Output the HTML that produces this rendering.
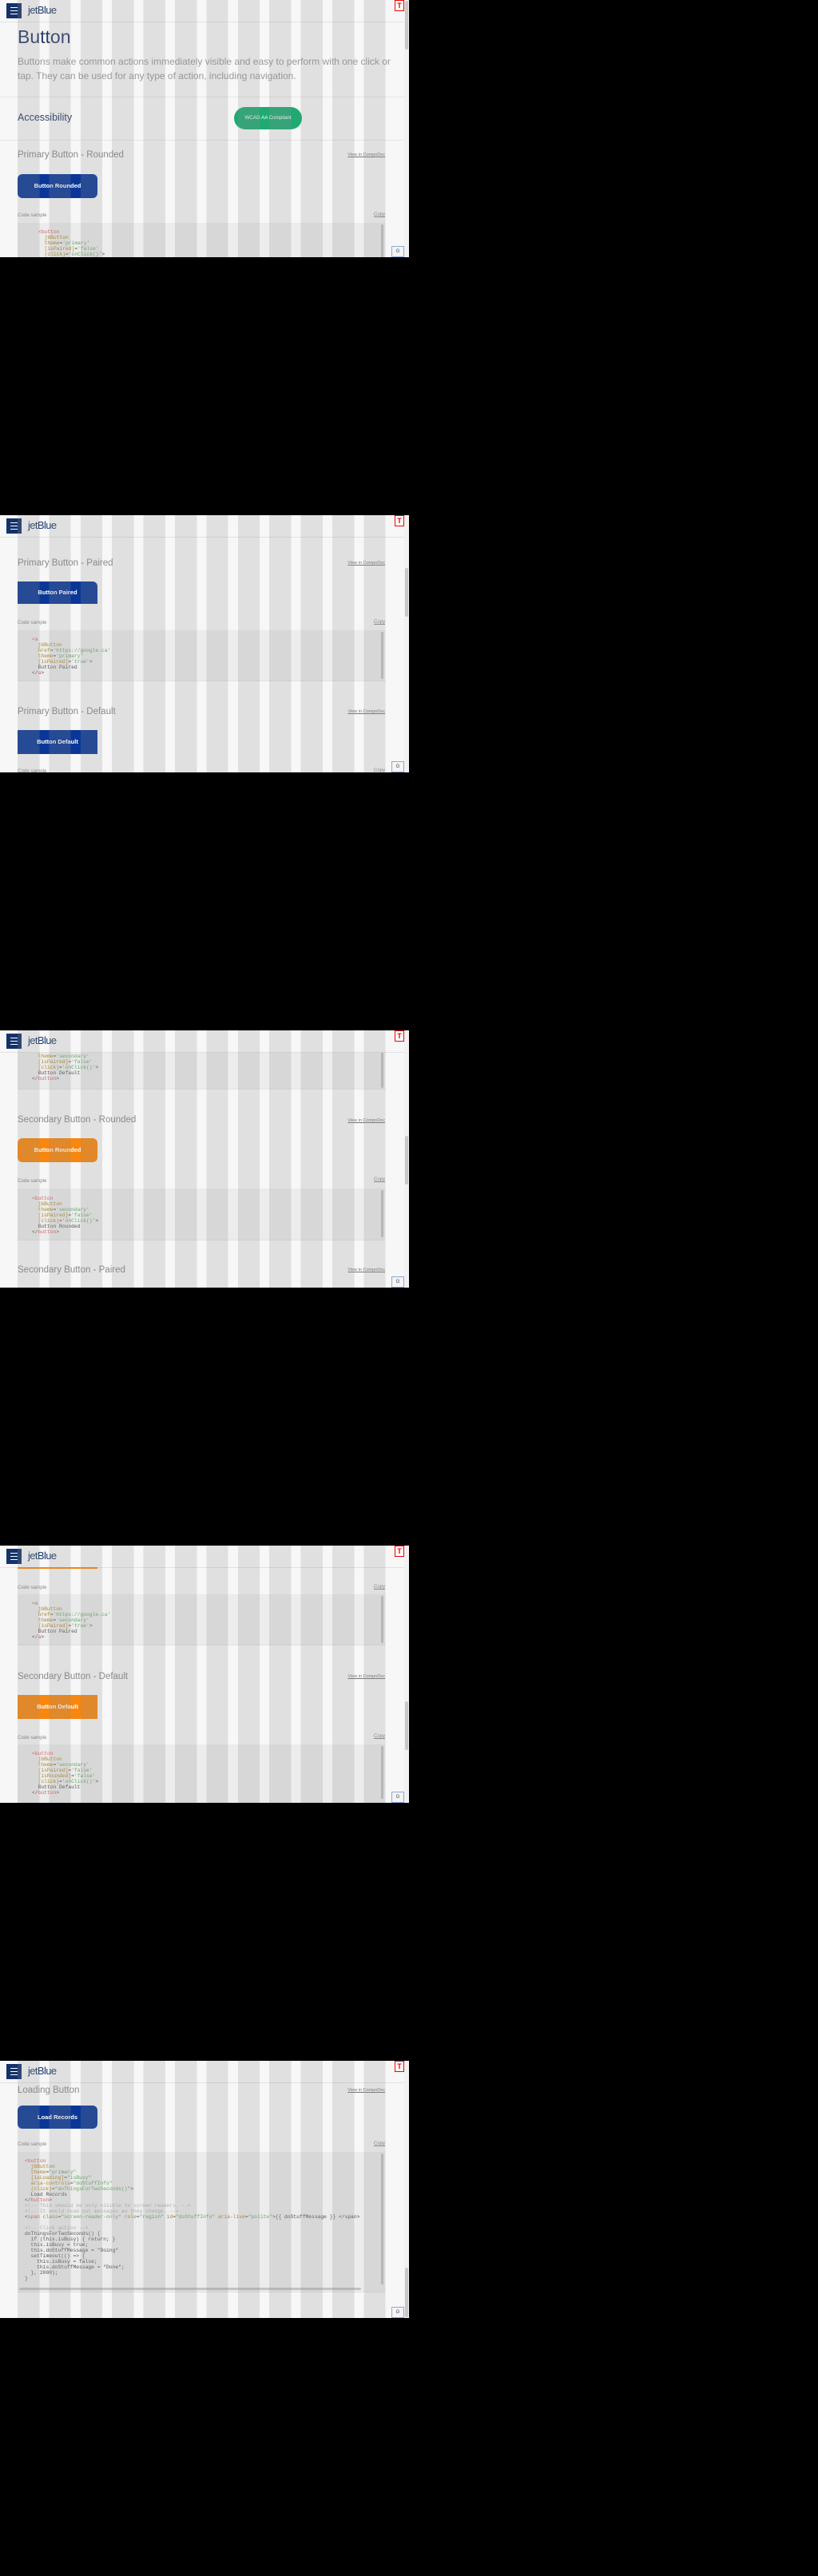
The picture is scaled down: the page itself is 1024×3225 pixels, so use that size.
<!DOCTYPE html>
<html><head><meta charset="utf-8">
<style>
*{margin:0;padding:0;box-sizing:border-box}
html,body{width:1024px;height:3225px;background:#000;overflow:hidden}
body{position:relative;font-family:"Liberation Sans",sans-serif}
.p{position:absolute;left:0;width:512px;height:322px;overflow:hidden;background:#f7f7f7}
.grid{position:absolute;left:22px;top:0;width:461px;height:322px;z-index:50;pointer-events:none;
background:repeating-linear-gradient(90deg,rgba(140,140,140,.22) 0 27.3px,transparent 27.3px 39.4px)}
.hdr{position:absolute;left:0;top:0;width:506px;height:28px;background:#f7f7f7;border-bottom:1px solid #e2e2e2;z-index:20}
.ham{position:absolute;left:8px;top:4px;width:19px;height:19px;background:#14316a}
.ham i{position:absolute;left:5px;width:9px;height:1.4px;background:#fff}
.logo{position:absolute;left:35px;top:5px;font-size:13px;color:#1b3a6b;letter-spacing:-.6px}
.tbox{position:absolute;left:494px;top:0;width:12px;height:14px;border:1px solid #e00;color:#e00;font-size:9px;font-weight:bold;text-align:center;line-height:12px;z-index:60;background:#fff}
.gbox{position:absolute;left:490px;top:308px;width:16px;height:14px;border:1px solid #8aa8e0;background:#f4f4f4;color:#444;font-size:6px;text-align:center;line-height:12px;z-index:60}
.sb{position:absolute;left:506px;top:0;width:6px;height:322px;background:#f1f1f1;z-index:30}
.sb i{position:absolute;left:1px;width:4px;background:#c8c8c8;border-radius:2px}
.h{position:absolute;left:22px;font-size:11.5px;color:#8a8a8a;line-height:14px}
.vc{position:absolute;right:30px;font-size:5.5px;color:#777;text-decoration:underline}
.cs{position:absolute;left:22px;font-size:6.2px;color:#888}
.cp{position:absolute;right:30px;font-size:6px;color:#888;text-decoration:underline}
.btn{position:absolute;left:22px;width:100px;height:30px;color:#fff;font-weight:bold;font-size:7.5px;text-align:center;line-height:30px}
.blue{background:#0a3797}.org{background:#f7870f}
.code{position:absolute;left:22px;width:460px;background:#ececec;border-bottom:1px solid #e2e2e2}
.code pre{position:absolute;left:18px;font-family:"Liberation Mono",monospace;font-size:6.3px;line-height:7px;color:#555;white-space:pre}
.code .vs{position:absolute;right:2px;top:2px;width:3px;background:#c2c2c2;border-radius:2px}
.t{color:#e06060}.a{color:#b08a2a}.s{color:#6aa86a}.c{color:#b0b0b0}
.hr{position:absolute;left:0;width:506px;height:1px;background:#e6e6e6}
</style></head><body>

<!-- PANEL 1 -->
<div class="p" style="top:0">
<div class="hdr"><div class="ham"><i style="top:5px"></i><i style="top:9px"></i><i style="top:13px"></i></div><div class="logo">jetBlue</div></div>
<div style="position:absolute;left:22px;top:33px;font-size:23px;color:#2a3c6c">Button</div>
<div style="position:absolute;left:22px;top:68px;width:470px;font-size:12px;line-height:18px;color:#9a9a9a">Buttons make common actions immediately visible and easy to perform with one click or tap. They can be used for any type of action, including navigation.</div>
<div class="hr" style="top:121px"></div>
<div style="position:absolute;left:22px;top:140px;font-size:12.5px;color:#2a3c6c">Accessibility</div>
<div style="position:absolute;left:293px;top:134px;width:85px;height:28px;border-radius:14px;background:#1faa72;color:#fff;font-size:6.2px;text-align:center;line-height:28px">WCAG AA Compliant</div>
<div class="hr" style="top:175px"></div>
<div class="h" style="top:187px">Primary Button - Rounded</div>
<div class="vc" style="top:191px">View in CompoDoc</div>
<div class="btn blue" style="top:218px;border-radius:6px">Button Rounded</div>
<div class="cs" style="top:266px">Code sample</div>
<div class="cp" style="top:266px">Copy</div>
<div class="code" style="top:279px;height:60px"><div class="vs" style="height:50px"></div>
<pre style="top:8px;left:26px"><span class="t">&lt;button</span>
  <span class="a">jbButton</span>
  <span class="a">theme</span>=<span class="s">'primary'</span>
  <span class="a">[isPaired]</span>=<span class="s">'false'</span>
  <span class="a">(click)</span>=<span class="s">'onClick()'</span>&gt;</pre></div>
<div class="sb"><i style="top:1px;height:61px"></i></div>
<div class="grid"></div><div class="tbox">T</div><div class="gbox">G</div>
</div>

<!-- PANEL 2 -->
<div class="p" style="top:645px">
<div class="hdr"><div class="ham"><i style="top:5px"></i><i style="top:9px"></i><i style="top:13px"></i></div><div class="logo">jetBlue</div></div>
<div class="h" style="top:53px">Primary Button - Paired</div>
<div class="vc" style="top:57px">View in CompoDoc</div>
<div class="btn blue" style="top:83px;height:28px;line-height:28px;border-radius:0 6px 0 0">Button Paired</div>
<div class="cs" style="top:131px">Code sample</div>
<div class="cp" style="top:131px">Copy</div>
<div class="code" style="top:144px;height:64px"><div class="vs" style="height:59px"></div>
<pre style="top:8px;left:18px"><span class="t">&lt;a</span>
  <span class="a">jbButton</span>
  <span class="a">href</span>=<span class="s">'https://google.ca'</span>
  <span class="a">theme</span>=<span class="s">'primary'</span>
  <span class="a">[isPaired]</span>=<span class="s">'true'</span>&gt;
  Button Paired
&lt;/<span class="t">a</span>&gt;</pre></div>
<div class="h" style="top:239px">Primary Button - Default</div>
<div class="vc" style="top:243px">View in CompoDoc</div>
<div class="btn blue" style="top:269px">Button Default</div>
<div class="cs" style="top:317px">Code sample</div>
<div class="cp" style="top:317px">Copy</div>
<div class="sb"><i style="top:66px;height:61px"></i></div>
<div class="grid"></div><div class="tbox">T</div><div class="gbox">G</div>
</div>

<!-- PANEL 3 -->
<div class="p" style="top:1290px">
<div class="code" style="top:0;height:74px"><div class="vs" style="height:70px"></div>
<pre style="top:22px;left:18px">  <span class="a">jbButton</span>
  <span class="a">theme</span>=<span class="s">'secondary'</span>
  <span class="a">[isPaired]</span>=<span class="s">'false'</span>
  <span class="a">(click)</span>=<span class="s">'onClick()'</span>&gt;
  Button Default
&lt;/<span class="t">button</span>&gt;</pre></div>
<div class="hdr"><div class="ham"><i style="top:5px"></i><i style="top:9px"></i><i style="top:13px"></i></div><div class="logo">jetBlue</div></div>
<div class="h" style="top:105px">Secondary Button - Rounded</div>
<div class="vc" style="top:110px">View in CompoDoc</div>
<div class="btn org" style="top:135px;border-radius:6px">Button Rounded</div>
<div class="cs" style="top:185px">Code sample</div>
<div class="cp" style="top:184px">Copy</div>
<div class="code" style="top:198px;height:65px"><div class="vs" style="height:59px"></div>
<pre style="top:9px;left:18px"><span class="t">&lt;button</span>
  <span class="a">jbButton</span>
  <span class="a">theme</span>=<span class="s">'secondary'</span>
  <span class="a">[isPaired]</span>=<span class="s">'false'</span>
  <span class="a">(click)</span>=<span class="s">'onClick()'</span>&gt;
  Button Rounded
&lt;/<span class="t">button</span>&gt;</pre></div>
<div class="h" style="top:293px">Secondary Button - Paired</div>
<div class="vc" style="top:297px">View in CompoDoc</div>
<div class="sb"><i style="top:132px;height:61px"></i></div>
<div class="grid"></div><div class="tbox">T</div><div class="gbox">G</div>
</div>

<!-- PANEL 4 -->
<div class="p" style="top:1935px">
<div style="position:absolute;left:22px;top:27px;width:100px;height:2px;background:#f7870f;z-index:25"></div>
<div class="hdr"><div class="ham"><i style="top:5px"></i><i style="top:9px"></i><i style="top:13px"></i></div><div class="logo">jetBlue</div></div>
<div class="cs" style="top:49px">Code sample</div>
<div class="cp" style="top:49px">Copy</div>
<div class="code" style="top:61px;height:64px"><div class="vs" style="height:59px"></div>
<pre style="top:8px;left:18px"><span class="t">&lt;a</span>
  <span class="a">jbButton</span>
  <span class="a">href</span>=<span class="s">'https://google.ca'</span>
  <span class="a">theme</span>=<span class="s">'secondary'</span>
  <span class="a">[isPaired]</span>=<span class="s">'true'</span>&gt;
  Button Paired
&lt;/<span class="t">a</span>&gt;</pre></div>
<div class="h" style="top:157px">Secondary Button - Default</div>
<div class="vc" style="top:161px">View in CompoDoc</div>
<div class="btn org" style="top:187px">Button Default</div>
<div class="cs" style="top:237px">Code sample</div>
<div class="cp" style="top:236px">Copy</div>
<div class="code" style="top:249px;height:75px"><div class="vs" style="height:66px"></div>
<pre style="top:8px;left:18px"><span class="t">&lt;button</span>
  <span class="a">jbButton</span>
  <span class="a">theme</span>=<span class="s">'secondary'</span>
  <span class="a">[isPaired]</span>=<span class="s">'false'</span>
  <span class="a">[isRounded]</span>=<span class="s">'false'</span>
  <span class="a">(click)</span>=<span class="s">'onClick()'</span>&gt;
  Button Default
&lt;/<span class="t">button</span>&gt;</pre></div>
<div class="sb"><i style="top:195px;height:61px"></i></div>
<div class="grid"></div><div class="tbox">T</div><div class="gbox">G</div>
</div>

<!-- PANEL 5 -->
<div class="p" style="top:2580px">
<div class="hdr"><div class="ham"><i style="top:5px"></i><i style="top:9px"></i><i style="top:13px"></i></div><div class="logo">jetBlue</div></div>
<div class="h" style="top:30px">Loading Button</div>
<div class="vc" style="top:34px">View in CompoDoc</div>
<div class="btn blue" style="top:56px;height:29px;line-height:29px;border-radius:6px">Load Records</div>
<div class="cs" style="top:101px">Code sample</div>
<div class="cp" style="top:101px">Copy</div>
<div class="code" style="top:114px;height:176px;overflow:hidden"><div class="vs" style="height:164px"></div>
<pre style="top:8px;left:9px"><span class="t">&lt;button</span>
  <span class="a">jbButton</span>
  <span class="a">theme</span>=<span class="s">"primary"</span>
  <span class="a">[isLoading]</span>=<span class="s">"isBusy"</span>
  <span class="a">aria-controls</span>=<span class="s">"doStuffInfo"</span>
  <span class="a">(click)</span>=<span class="s">"doThingsForTwoSeconds()"</span>&gt;
  Load Records
&lt;/<span class="t">button</span>&gt;
<span class="c">&lt;!-- This should be only visible to screen readers. --&gt;</span>
<span class="c">&lt;!-- It would read out messages as they change. --&gt;</span>
&lt;<span class="t">span</span> <span class="a">class</span>=<span class="s">"screen-reader-only"</span> <span class="a">role</span>=<span class="s">"region"</span> <span class="a">id</span>=<span class="s">"doStuffInfo"</span> <span class="a">aria-live</span>=<span class="s">"polite"</span>&gt;{{ doStuffMessage }} &lt;/span&gt;

<span class="c">&lt;!-- Click action --&gt;</span>
doThingsForTwoSeconds() {
  if (this.isBusy) { return; }
  this.isBusy = true;
  this.doStuffMessage = "Doing"
  setTimeout(() =&gt; {
    this.isBusy = false;
    this.doStuffMessage = "Done";
  }, 2000);
}</pre>
<div style="position:absolute;left:2px;top:170px;width:428px;height:3px;background:#c2c2c2;border-radius:2px"></div>
</div>
<div class="sb"><i style="top:259px;height:62px"></i></div>
<div class="grid"></div><div class="tbox">T</div><div class="gbox">G</div>
</div>

</body></html>
